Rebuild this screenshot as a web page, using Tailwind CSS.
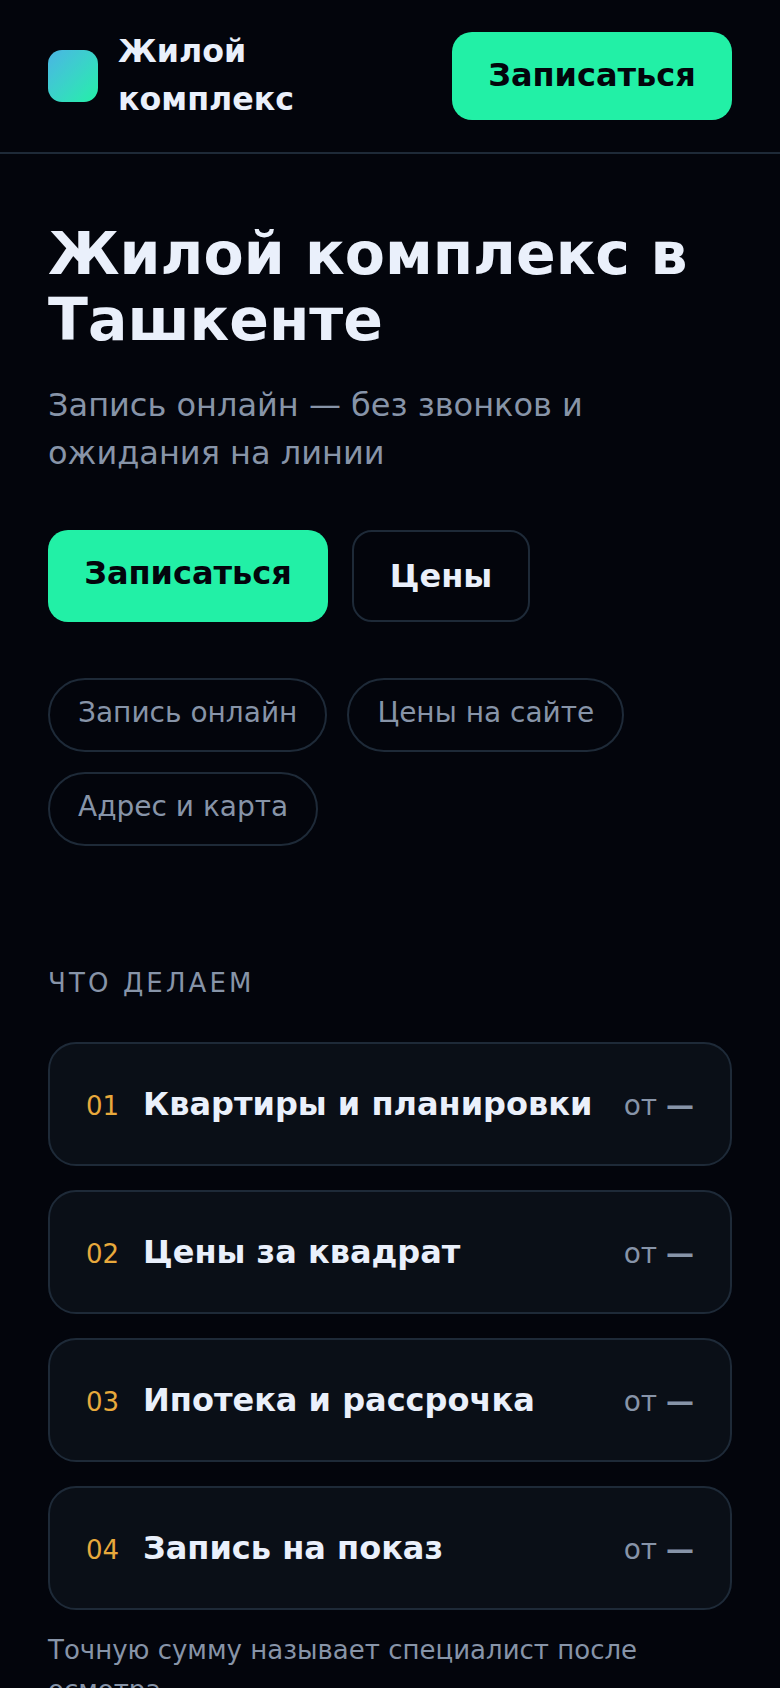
<!DOCTYPE html>
<html lang="ru">
<head>
  <meta charset="UTF-8">
  <title>Жилой комплекс</title>
  <script src="https://cdn.jsdelivr.net/npm/@tailwindcss/browser@4"></script>
</head>
<body class="bg-[#03050c] text-[#eaf0fb] font-['DejaVu_Sans',sans-serif] h-[1688px] overflow-hidden">
  <!-- header -->
  <header class="h-[154px] px-12 flex items-center justify-between border-b-2 border-[#1e2a38]">
    <div class="flex items-center gap-5">
      <div class="w-[50px] h-[52px] rounded-[14px] bg-linear-to-br from-[#4ab4e4] to-[#22f0a6]"></div>
      <div class="w-[240px] pb-[2px] text-[31.7px] leading-[48px] font-bold">Жилой комплекс</div>
    </div>
    <a class="h-[88px] w-[280px] pb-[2px] rounded-[20px] bg-[#22f0a6] text-[#03050c] text-[32px] font-bold flex items-center justify-center">Записаться</a>
  </header>

  <main class="px-12">
    <!-- hero -->
    <section class="pt-[68px]">
      <h1 class="text-[58.5px] leading-[65.5px] font-bold">Жилой комплекс в Ташкенте</h1>
      <p class="mt-7 text-[32px] leading-[48px] text-[#8794a8]">Запись онлайн — без звонков и ожидания на линии</p>
      <div class="mt-[53px] flex gap-6">
        <a class="h-[92px] w-[280px] pb-1.5 rounded-[20px] bg-[#22f0a6] text-[#03050c] text-[32px] font-bold flex items-center justify-center">Записаться</a>
        <a class="h-[92px] w-[178px] rounded-[20px] border-2 border-[#1e2a38] text-[32px] font-bold flex items-center justify-center">Цены</a>
      </div>
      <div class="mt-14 flex flex-wrap gap-x-5 gap-y-[20px] text-[28px] text-[#8794a8]">
        <span class="h-[74px] px-7 pb-1 rounded-full border-2 border-[#1e2a38] flex items-center">Запись онлайн</span>
        <span class="h-[74px] px-7 pb-1 rounded-full border-2 border-[#1e2a38] flex items-center">Цены на сайте</span>
        <span class="h-[74px] px-7 pb-1 rounded-full border-2 border-[#1e2a38] flex items-center">Адрес и карта</span>
      </div>
    </section>

    <!-- services -->
    <section class="mt-[119px]">
      <h2 class="text-[26px] leading-[36px] tracking-[0.12em] text-[#8794a8]">ЧТО ДЕЛАЕМ</h2>
      <div class="mt-[41px] flex flex-col gap-6">
        <div class="h-[124px] px-9 pt-9 rounded-[28px] border-2 border-[#1e2a38] bg-[#0a0f17] flex items-baseline">
          <span class="w-[57px] text-[26px] text-[#e8a93c]">01</span>
          <span class="flex-1 text-[32px] font-bold">Квартиры и планировки</span>
          <span class="text-[28px] text-[#8794a8]">от <b>—</b></span>
        </div>
        <div class="h-[124px] px-9 pt-9 rounded-[28px] border-2 border-[#1e2a38] bg-[#0a0f17] flex items-baseline">
          <span class="w-[57px] text-[26px] text-[#e8a93c]">02</span>
          <span class="flex-1 text-[32px] font-bold">Цены за квадрат</span>
          <span class="text-[28px] text-[#8794a8]">от <b>—</b></span>
        </div>
        <div class="h-[124px] px-9 pt-9 rounded-[28px] border-2 border-[#1e2a38] bg-[#0a0f17] flex items-baseline">
          <span class="w-[57px] text-[26px] text-[#e8a93c]">03</span>
          <span class="flex-1 text-[32px] font-bold">Ипотека и рассрочка</span>
          <span class="text-[28px] text-[#8794a8]">от <b>—</b></span>
        </div>
        <div class="h-[124px] px-9 pt-9 rounded-[28px] border-2 border-[#1e2a38] bg-[#0a0f17] flex items-baseline">
          <span class="w-[57px] text-[26px] text-[#e8a93c]">04</span>
          <span class="flex-1 text-[32px] font-bold">Запись на показ</span>
          <span class="text-[28px] text-[#8794a8]">от <b>—</b></span>
        </div>
      </div>
      <p class="mt-5 text-[26px] leading-[40px] text-[#8794a8]">Точную сумму называет специалист после осмотра</p>
    </section>
  </main>
</body>
</html>
